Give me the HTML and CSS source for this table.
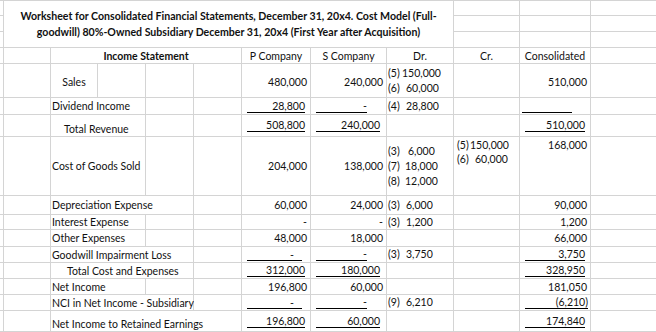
FILE: index.html
```html
<!DOCTYPE html>
<html>
<head>
<meta charset="utf-8">
<title>Worksheet</title>
<link rel="stylesheet" href="styles.css">
</head>
<body>
<div class="sheet">
  <!-- title rows -->
  <div class="c"></div>
  <div class="c title">Worksheet for Consolidated Financial Statements, December 31, 20x4. Cost Model (Full-<br>goodwill) 80%-Owned Subsidiary December 31, 20x4 (First Year after Acquisition)</div>
  <div class="c"></div><div class="c"></div><div class="c"></div>
  <div class="c"></div><div class="c"></div><div class="c"></div><div class="c"></div>
  <div class="c"></div><div class="c"></div><div class="c"></div><div class="c"></div>

  <!-- header -->
  <div class="c"></div><div class="c"></div>
  <div class="c ctr s4 bold">Income Statement</div>
  <div class="c ctr">P Company</div>
  <div class="c ctr">S Company</div>
  <div class="c ctr">Dr.</div>
  <div class="c ctr">Cr.</div>
  <div class="c ctr">Consolidated</div>
  <div class="c"></div>

  <!-- Sales -->
  <div class="c"></div><div class="c"></div>
  <div class="c ctr low">Sales</div>
  <div class="c"></div><div class="c"></div><div class="c"></div>
  <div class="c n low">480,000</div>
  <div class="c n low">240,000</div>
  <div class="c dr">
    <div class="e"><span class="k">(5)</span><span class="v">150,000</span></div>
    <div class="e"><span class="k">(6)</span><span class="v m4">60,000</span></div>
  </div>
  <div class="c"></div>
  <div class="c n low">510,000</div>
  <div class="c"></div>

  <!-- Dividend Income -->
  <div class="c"></div><div class="c"></div>
  <div class="c lab s2">Dividend Income</div>
  <div class="c"></div><div class="c"></div>
  <div class="c uc pr5"><span class="u w58">28,800</span></div>
  <div class="c uc pr19"><span class="u w51">-</span></div>
  <div class="c dr">
    <div class="e"><span class="k">(4)</span><span class="v m4">28,800</span></div>
  </div>
  <div class="c"></div>
  <div class="c uc pr18"><span class="u w50"></span></div>
  <div class="c"></div>

  <!-- Total Revenue -->
  <div class="c"></div><div class="c"></div>
  <div class="c lab s2 bot ind13">Total Revenue</div>
  <div class="c"></div><div class="c"></div>
  <div class="c uc pr5"><span class="u w58">508,800</span></div>
  <div class="c uc pr6"><span class="u w64">240,000</span></div>
  <div class="c"></div>
  <div class="c"></div>
  <div class="c uc pr5"><span class="u w60">510,000</span></div>
  <div class="c"></div>

  <!-- Cost of Goods Sold -->
  <div class="c"></div><div class="c"></div>
  <div class="c lab s2">Cost of Goods Sold</div>
  <div class="c"></div><div class="c"></div>
  <div class="c n">204,000</div>
  <div class="c n">138,000</div>
  <div class="c dr">
    <div class="e"><span class="k">(3)</span><span class="v m6">6,000</span></div>
    <div class="e"><span class="k">(7)</span><span class="v m3">18,000</span></div>
    <div class="e"><span class="k">(8)</span><span class="v m3">12,000</span></div>
  </div>
  <div class="c cr">
    <div class="e"><span class="k">(5)</span><span class="v">150,000</span></div>
    <div class="e"><span class="k">(6)</span><span class="v m5">60,000</span></div>
  </div>
  <div class="c n top">168,000</div>
  <div class="c"></div>

  <!-- Depreciation -->
  <div class="c"></div><div class="c"></div>
  <div class="c lab s3">Depreciation Expense</div>
  <div class="c"></div>
  <div class="c n">60,000</div>
  <div class="c n">24,000</div>
  <div class="c dr">
    <div class="e"><span class="k">(3)</span><span class="v m4">6,000</span></div>
  </div>
  <div class="c"></div>
  <div class="c n">90,000</div>
  <div class="c"></div>

  <!-- Interest -->
  <div class="c"></div><div class="c"></div>
  <div class="c lab s2">Interest Expense</div>
  <div class="c"></div><div class="c"></div>
  <div class="c n">-</div>
  <div class="c n">-</div>
  <div class="c dr">
    <div class="e"><span class="k">(3)</span><span class="v m4">1,200</span></div>
  </div>
  <div class="c"></div>
  <div class="c n">1,200</div>
  <div class="c"></div>

  <!-- Other Expenses -->
  <div class="c"></div><div class="c"></div>
  <div class="c lab s2">Other Expenses</div>
  <div class="c"></div><div class="c"></div>
  <div class="c n">48,000</div>
  <div class="c n">18,000</div>
  <div class="c"></div>
  <div class="c"></div>
  <div class="c n">66,000</div>
  <div class="c"></div>

  <!-- Goodwill -->
  <div class="c"></div><div class="c"></div>
  <div class="c lab s3">Goodwill Impairment Loss</div>
  <div class="c"></div>
  <div class="c uc pr8"><span class="u w55 dash">-</span></div>
  <div class="c uc pr19"><span class="u w51">-</span></div>
  <div class="c dr">
    <div class="e"><span class="k">(3)</span><span class="v m4">3,750</span></div>
  </div>
  <div class="c"></div>
  <div class="c uc pr5"><span class="u w60">3,750</span></div>
  <div class="c"></div>

  <!-- Total Cost -->
  <div class="c"></div><div class="c"></div>
  <div class="c lab s3 ind16">Total Cost and Expenses</div>
  <div class="c"></div>
  <div class="c uc pr5"><span class="u w58">312,000</span></div>
  <div class="c uc pr6"><span class="u w64">180,000</span></div>
  <div class="c"></div>
  <div class="c"></div>
  <div class="c uc pr5"><span class="u w60">328,950</span></div>
  <div class="c"></div>

  <!-- Net Income -->
  <div class="c"></div><div class="c"></div>
  <div class="c lab s2">Net Income</div>
  <div class="c"></div><div class="c"></div>
  <div class="c n">196,800</div>
  <div class="c n">60,000</div>
  <div class="c"></div>
  <div class="c"></div>
  <div class="c n">181,050</div>
  <div class="c"></div>

  <!-- NCI -->
  <div class="c"></div><div class="c"></div>
  <div class="c lab s3">NCI in Net Income - Subsidiary</div>
  <div class="c"></div>
  <div class="c uc pr8"><span class="u w55 dash">-</span></div>
  <div class="c uc pr19"><span class="u w51">-</span></div>
  <div class="c dr">
    <div class="e"><span class="k">(9)</span><span class="v m4">6,210</span></div>
  </div>
  <div class="c"></div>
  <div class="c uc pr2"><span class="u w63">(6,210)</span></div>
  <div class="c"></div>

  <!-- Net Income to RE -->
  <div class="c"></div><div class="c"></div>
  <div class="c lab s4 bot">Net Income to Retained Earnings</div>
  <div class="c uc pr5"><span class="u w58">196,800</span></div>
  <div class="c uc pr6"><span class="u w64">60,000</span></div>
  <div class="c"></div>
  <div class="c"></div>
  <div class="c uc pr5"><span class="u w60">174,840</span></div>
  <div class="c"></div>

  <!-- trailing row -->
  <div class="c"></div><div class="c"></div><div class="c"></div><div class="c"></div>
  <div class="c"></div><div class="c"></div><div class="c"></div><div class="c"></div>
  <div class="c"></div><div class="c"></div><div class="c"></div><div class="c"></div>
</div>
</body>
</html>
```

FILE: styles.css
```css
html, body {
  margin: 0;
  padding: 0;
  height: 332px;
  background: #fff;
  overflow: hidden;
}

.sheet {
  display: grid;
  grid-template-columns: 3px 46px 46px 47px 47px 47px 68px 75px 66px 65px 70px 80px;
  grid-template-rows: 14px 15px 15px 15px 33px 16px 21px 58px 18px 14px 16px 15px 15px 15px 15px 20px 20px;
  gap: 1px;
  padding-top: 1px;
  width: max-content;
  background: #d4d4d4;
  font-family: Lato, "Open Sans", sans-serif;
  font-size: 10.5px;
  color: #111;
}

.c {
  background: #fff;
  display: flex;
  align-items: center;
  white-space: pre;
  min-width: 0;
  line-height: 14px;
}

.title {
  grid-column: span 8;
  grid-row: span 3;
  justify-content: center;
  text-align: center;
  white-space: normal;
  font-weight: bold;
  font-size: 10.6px;
  line-height: 16px;
}

.bold { font-weight: bold; }
.s2 { grid-column: span 2; }
.s3 { grid-column: span 3; }
.s4 { grid-column: span 4; }

.ctr { justify-content: center; }
.lab { padding-left: 1px; }
.ind13 { padding-left: 13px; }
.ind16 { padding-left: 16px; }
.bot { align-items: flex-end; }
.top { align-items: flex-start; padding-top: 1px; }
.low { padding-top: 3px; }

.n { justify-content: flex-end; padding-right: 3px; }

.uc { justify-content: flex-end; }
.pr2 { padding-right: 2px; }
.pr5 { padding-right: 5px; }
.pr6 { padding-right: 6px; }
.pr8 { padding-right: 8px; }
.pr18 { padding-right: 18px; }
.pr19 { padding-right: 19px; }

.u {
  display: block;
  height: 12px;
  line-height: 12px;
  border-bottom: 1px solid #000;
  text-align: right;
}
.w50 { width: 50px; }
.w51 { width: 51px; }
.w55 { width: 55px; }
.w58 { width: 58px; }
.w60 { width: 60px; }
.w63 { width: 63px; }
.w64 { width: 64px; }
.dash { padding-right: 8px; box-sizing: border-box; }

.dr {
  flex-direction: column;
  align-items: flex-start;
  justify-content: center;
  padding-left: 1px;
  line-height: 15px;
}
.cr {
  flex-direction: column;
  align-items: flex-start;
  justify-content: flex-start;
  padding-left: 3px;
  padding-top: 1px;
  line-height: 14px;
}
.e { display: flex; }
.k { flex: none; width: 14px; }
.cr .k { width: 13px; }
.m3 { margin-left: 3px; }
.m4 { margin-left: 4px; }
.m5 { margin-left: 5px; }
.m6 { margin-left: 6px; }
```
